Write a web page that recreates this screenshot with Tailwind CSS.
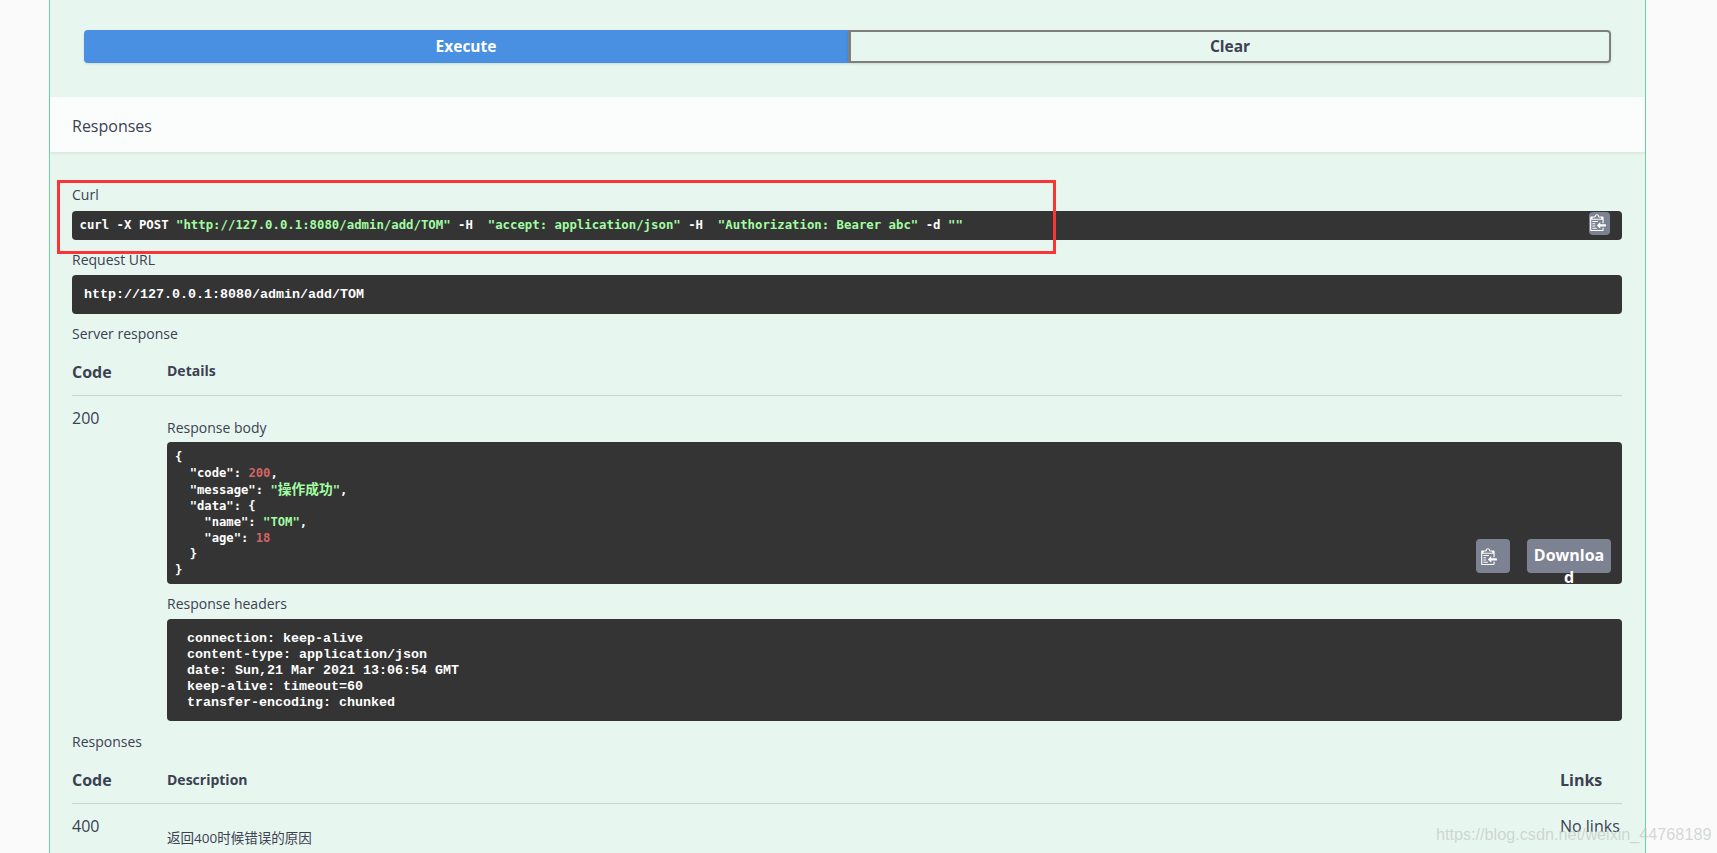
<!DOCTYPE html>
<html lang="zh">
<head>
<meta charset="utf-8">
<title>Responses</title>
<script src="https://cdn.jsdelivr.net/npm/@tailwindcss/browser@4"></script>
</head>
<body class="relative h-[853px] overflow-hidden bg-[#fafafa] font-['Open_Sans','Noto_Sans_CJK_SC',sans-serif] text-[#3b4151]">
<div class="ml-[49px] w-[1597px] h-[853px] border-x border-[#49cc90]/80 bg-[#e8f6f0]">

    <!-- execute / clear -->
    <div class="flex pt-[30px] pl-[34px] pr-[34px] h-[97px]">
        <button class="w-[764px] h-[33px] rounded-l bg-[#4990e2] text-white font-bold text-[15.5px] shadow-sm">Execute</button>
        <button class="flex-1 h-[33px] rounded-r border-2 border-l-[3px] border-[#7f7f7f] font-bold text-[15.5px] shadow-sm">Clear</button>
    </div>

    <div class="flex items-center h-[56px] pl-[22px] pt-[2px] bg-[#fbfdfc] border-b border-[#dfe7e3] shadow-[0_1px_2px_rgba(0,0,0,0.06)] text-[16px]">Responses</div>

    <div class="pl-[22px] pr-[23px]">
        <div class="flex items-end h-[58px] pb-[6px] text-[14px] leading-5">Curl</div>
        <div class="relative flex items-center h-[29px] pl-[7.5px] rounded bg-[#343434] font-['DejaVu_Sans_Mono',monospace] font-bold text-[12.33px] text-white whitespace-pre">curl -X POST <span class="text-[#a2fca2]">"http://127.0.0.1:8080/admin/add/TOM"</span> -H  <span class="text-[#a2fca2]">"accept: application/json"</span> -H  <span class="text-[#a2fca2]">"Authorization: Bearer abc"</span> -d <span class="text-[#a2fca2]">""</span>
            <button class="absolute right-3 top-px flex items-start justify-start pl-px pt-px w-[21px] h-[23px] rounded bg-[#7d8293]">
                <svg viewBox="0 0 14 16" class="w-[16px] h-[18px] fill-white"><path d="M2 13h4v1H2v-1zm5-6H2v1h5V7zm2 3V8l-3 3 3 3v-2h5v-2H9zM4.5 9H2v1h2.5V9zM2 12h2.5v-1H2v1zm9 1h1v2c-.02.28-.11.52-.3.7-.19.18-.42.28-.7.3H1c-.55 0-1-.45-1-1V4c0-.55.45-1 1-1h3c0-1.11.89-2 2-2 1.11 0 2 .89 2 2h3c.55 0 1 .45 1 1v5h-1V6H1v9h10v-2zM2 5h8c0-.55-.45-1-1-1H8c-.55 0-1-.45-1-1s-.45-1-1-1-1 .45-1 1-.45 1-1 1H3c-.55 0-1 .45-1 1z"/></svg>
            </button>
        </div>

        <div class="flex items-center h-[35px] pt-[4px] text-[14px]">Request URL</div>
        <div class="flex items-center h-[39px] pl-[12px] rounded bg-[#343434] font-['Liberation_Mono',monospace] font-bold text-[13.33px] text-white">http://127.0.0.1:8080/admin/add/TOM</div>

        <div class="flex items-center h-[40px] pb-px text-[14px]">Server response</div>

        <div class="flex items-center h-[48px] mt-[-6px] border-b border-[#c7d3cd]">
            <div class="w-[95px] font-bold text-[16px]">Code</div>
            <div class="pb-[2px] font-bold text-[14px]">Details</div>
        </div>
        <div class="flex">
            <div class="w-[95px] pt-3 text-[16px] leading-5">200</div>
            <div class="flex-1">
                <div class="flex items-center h-[20px] mt-[22px] pb-[2px] text-[14px]">Response body</div>
                <div class="relative mt-1 h-[142px] pl-2 pt-[7px] rounded bg-[#343434] font-['DejaVu_Sans_Mono','Noto_Sans_CJK_SC',monospace] font-bold text-[12.2px] leading-4 text-white whitespace-pre">{
  "code": <span class="text-[#d36363]">200</span>,
  "message": <span class="text-[#a2fca2]">"<span class="text-[13.75px] leading-4">操作成功</span>"</span>,
  "data": {
    "name": <span class="text-[#a2fca2]">"TOM"</span>,
    "age": <span class="text-[#d36363]">18</span>
  }
}<button class="absolute right-[112px] top-[97px] flex items-center justify-start pl-[5px] w-[34px] h-[34px] rounded bg-[#7d8293]">
                        <svg viewBox="0 0 14 16" class="w-[16px] h-[18px] fill-white"><path d="M2 13h4v1H2v-1zm5-6H2v1h5V7zm2 3V8l-3 3 3 3v-2h5v-2H9zM4.5 9H2v1h2.5V9zM2 12h2.5v-1H2v1zm9 1h1v2c-.02.28-.11.52-.3.7-.19.18-.42.28-.7.3H1c-.55 0-1-.45-1-1V4c0-.55.45-1 1-1h3c0-1.11.89-2 2-2 1.11 0 2 .89 2 2h3c.55 0 1 .45 1 1v5h-1V6H1v9h10v-2zM2 5h8c0-.55-.45-1-1-1H8c-.55 0-1-.45-1-1s-.45-1-1-1-1 .45-1 1-.45 1-1 1H3c-.55 0-1 .45-1 1z"/></svg>
                    </button><div class="absolute right-[11px] top-[97px] w-[84px] h-[34px] px-[5px] rounded bg-[#7d8293] pt-[5px] text-center font-['Open_Sans',sans-serif] font-bold text-[16px] leading-[22px] text-white whitespace-normal break-all">Download</div></div>
                <div class="flex items-center h-[20px] mt-[10px] pb-[2px] text-[14px]">Response headers</div>
                <div class="mt-[5px] h-[102px] pl-5 pt-3 rounded bg-[#343434] font-['Liberation_Mono',monospace] font-bold text-[13.33px] leading-4 text-white whitespace-pre">connection: keep-alive
content-type: application/json
date: Sun,21 Mar 2021 13:06:54 GMT
keep-alive: timeout=60
transfer-encoding: chunked</div>
            </div>
        </div>

        <div class="flex items-center h-[20px] mt-[11px] pb-[2px] text-[14px]">Responses</div>
        <div class="flex items-center h-[47px] mt-[5px] border-b border-[#c7d3cd]">
            <div class="w-[95px] font-bold text-[16px]">Code</div>
            <div class="flex-1 pb-[2px] font-bold text-[14px]">Description</div>
            <div class="w-[62px] font-bold text-[16px]">Links</div>
        </div>
        <div class="flex">
            <div class="w-[95px] pt-3 text-[16px] leading-5">400</div>
            <div class="flex-1 pt-6 text-[13.5px] leading-5">返回400时候错误的原因</div>
            <div class="w-[62px] pt-3 text-[16px] leading-5 whitespace-nowrap">No links</div>
        </div>
    </div>
</div>

<!-- annotation drawn on top of the screenshot -->
<div class="absolute left-[57px] top-[180px] w-[999px] h-[74px] border-[3px] border-[#f93535]"></div>
<div class="absolute left-[1436px] top-[822px] font-['Liberation_Sans',sans-serif] text-[16.2px] leading-6 text-[#b9bfbd]/60 whitespace-nowrap">https://blog.csdn.net/weixin_44768189</div>
</body>
</html>
